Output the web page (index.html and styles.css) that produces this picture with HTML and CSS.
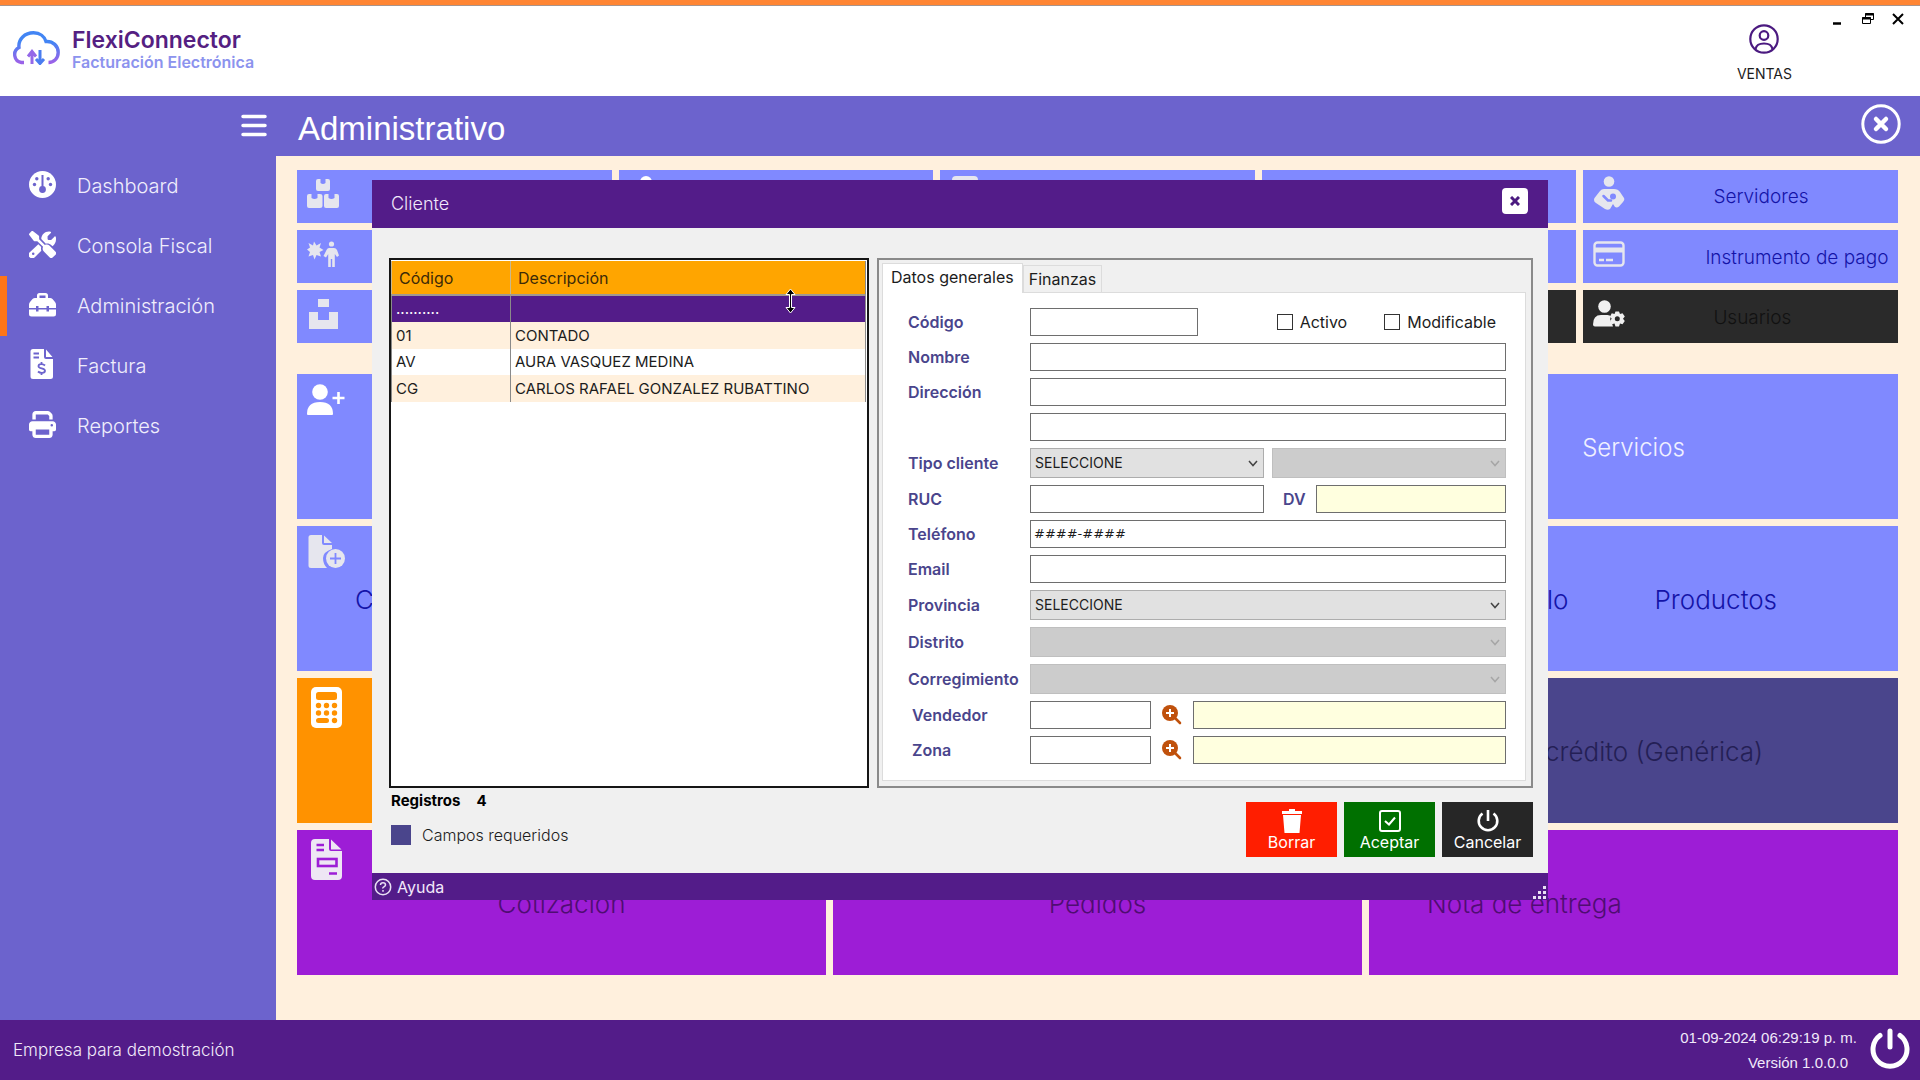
FILE: index.html
```html
<!DOCTYPE html>
<html lang="es">
<head>
<meta charset="utf-8">
<title>FlexiConnector - Facturación Electrónica</title>
<link rel="stylesheet" href="styles.css">
</head>
<body>
<div class="app">
  <header class="topbar">
    <div class="brand">
      <svg class="brand-logo" viewBox="0 0 48 34" fill="none">
        <defs><linearGradient id="cloud" x1="0" y1="0" x2="0" y2="1"><stop offset="0.3" stop-color="#4285f4"/><stop offset="1" stop-color="#9b62e8"/></linearGradient></defs>
        <path d="M12 31.500H9.500A8 8 0 0 1 7 16.500C6 8 13 1.800 21.500 1.800C28 1.800 32.500 5.500 34 10.500C41 10 46.200 15 46.200 21.500C46.200 27 42 31.500 36.500 31.500" stroke="url(#cloud)" stroke-width="3.400" stroke-linecap="butt"/>
        <path d="M20 33V22M16 25.500L20 20.500L24 25.500" stroke="#9468e8" stroke-width="3"/>
        <path d="M28 19V31M24 28L28 32.500L32 28" stroke="#4a7df0" stroke-width="3"/>
      </svg>
      <div class="brand-text">
        <span class="brand-name">FlexiConnector</span>
        <span class="brand-sub">Facturación Electrónica</span>
      </div>
    </div>
    <div class="user">
      <svg width="30" height="30" viewBox="0 0 30 30" fill="none" stroke="#4b1a80" stroke-width="2.200"><circle cx="15" cy="15" r="13.700"/><circle cx="15" cy="11.500" r="4.300"/><path d="M6.500 25C7.500 20.500 10 19.500 15 19.500S22.500 20.500 23.500 25"/></svg>
      <span>VENTAS</span>
    </div>
    <div class="window-controls">
      <button type="button" aria-label="Minimizar"><svg width="14" height="14"><path d="M2 11.500H10" stroke="#000" stroke-width="2.500"/></svg></button>
      <button type="button" aria-label="Restaurar"><svg width="14" height="14" fill="#fff" stroke="#000"><path d="M4.500 1.500H12.500V7.500H4.500Z"/><path d="M4 2.500H13" stroke-width="2"/><path d="M1.500 5.500H9.500V11.500H1.500Z"/><path d="M1 6.500H10" stroke-width="2"/></svg></button>
      <button type="button" aria-label="Cerrar"><svg width="14" height="14"><path d="M2 2L12 12M12 2L2 12" stroke="#000" stroke-width="2"/></svg></button>
    </div>
  </header>

  <div class="workspace">
    <nav class="sidebar">
      <div class="sidebar-head">
        <button type="button" aria-label="Menú"><svg width="26" height="24" stroke="#fff" stroke-width="3.500" stroke-linecap="round"><path d="M2 2.500H24M2 11.500H24M2 20.500H24"/></svg></button>
      </div>
      <a class="nav-item" href="#"><svg width="27" height="27" viewBox="0 0 27 27"><circle cx="13.500" cy="13.500" r="13.500" fill="#fff"/><g fill="#6c63cd"><circle cx="5.500" cy="13.500" r="1.700"/><circle cx="7.800" cy="7.800" r="1.700"/><circle cx="19.200" cy="7.800" r="1.700"/><circle cx="21.500" cy="13.500" r="1.700"/><circle cx="13.500" cy="18.500" r="3.400"/><rect x="12.500" y="4" width="2" height="14"/></g></svg><span>Dashboard</span></a>
      <a class="nav-item" href="#"><svg width="27" height="27" viewBox="0 0 512 512" fill="#fff"><path d="M78 5C69-2 56-1 47 7L7 47c-8 9-9 22-2 31l80 104c5 6 12 10 19 10h54l109 109c-15 29-10 65 15 90l112 112c15 15 39 15 54 0l55-55c15-15 15-39 0-54L391 281c-25-25-61-30-90-15L192 158v-54c0-8-4-15-10-19L78 5ZM20 397a68 68 0 1 0 95 95L234 373c-8-22-9-46-2-69l-55-54L20 397Zm492-253c0-11-1-21-4-31-3-12-17-15-26-6l-57 57c-3 3-7 5-11 5h-46c-9 0-16-7-16-16v-46c0-4 2-8 5-11l57-57c9-9 6-23-6-26-10-2-20-4-31-4-79 0-144 65-144 144v1l86 86c37-9 77 1 106 29l19 19c41-26 68-72 68-125ZM56 432a24 24 0 1 1 48 0 24 24 0 1 1-48 0Z"/></svg><span>Consola Fiscal</span></a>
      <a class="nav-item active" href="#"><svg width="27" height="27" viewBox="0 0 27 27" fill="#fff"><path d="M8 7V4.500Q8 2 10.500 2H16.500Q19 2 19 4.500V7H21Q22.500 7 23.500 8L26 11Q27 12 27 13.500V17H20V15H17.500V17H9.500V15H7V17H0V13.500Q0 12 1 11L3.500 8Q4.500 7 6 7ZM10.500 7H16.500V4.500H10.500ZM0 18.500H7V20.500H9.500V18.500H17.500V20.500H20V18.500H27V23Q27 25.500 24.500 25.500H2.500Q0 25.500 0 23Z" fill-rule="evenodd"/></svg><span>Administración</span></a>
      <a class="nav-item" href="#"><svg width="27" height="30" viewBox="0 0 27 30"><path d="M4 0H15V8Q15 10 17 10H24V27.500Q24 30 21.500 30H4Q1.500 30 1.500 27.500V2.500Q1.500 0 4 0ZM17 0.500L23.500 8H17Z" fill="#fff"/><path d="M4.500 4.500H10M4.500 8.500H10M12.500 13V15M12.500 24V26M16 16.500C14 14.500 9.500 14.500 9.500 17.200C9.500 20.200 16 18.500 16 21.800C16 24.500 11 24.500 9 22.500" fill="none" stroke="#6c63cd" stroke-width="1.800"/></svg><span>Factura</span></a>
      <a class="nav-item" href="#"><svg width="27" height="27" viewBox="0 0 512 512" fill="#fff"><path d="M128 0C93 0 64 29 64 64v96h64V64h227l29 29v67h64V93c0-17-7-33-19-45L400 19C388 7 372 0 355 0H128Zm256 352v96H128v-96h256Zm64 32h32c18 0 32-14 32-32v-96c0-35-29-64-64-64H64c-35 0-64 29-64 64v96c0 18 14 32 32 32h32v64c0 35 29 64 64 64h256c35 0 64-29 64-64v-64Zm-16-136a24 24 0 1 1 0 48 24 24 0 1 1 0-48Z"/></svg><span>Reportes</span></a>
    </nav>

    <main class="content">
      <div class="page-head">
        <h1>Administrativo</h1>
        <button type="button" aria-label="Cerrar sección"><svg width="40" height="40" fill="none" stroke="#fff"><circle cx="20" cy="20" r="18.200" stroke-width="3"/><path d="M15 15L25 25M25 15L15 25" stroke-width="4.500" stroke-linecap="round"/></svg></button>
      </div>

      <div class="tiles">
        <div class="tile-row small">
          <button type="button" class="tile"><svg width="32" height="32" viewBox="0 0 32 32" fill="#e6e6ee"><path d="M11 1H13.500V5Q16 7 18.500 5V1H21Q23 1 23 3V11Q23 13 21 13H11Q9 13 9 11V3Q9 1 11 1ZM2 16H4.500V20Q7.500 22 10.500 20V16H13Q15.500 16 15.500 18V28Q15.500 30 13 30H2Q0 30 0 28V18Q0 16 2 16ZM19 16H21.500V20Q24.500 22 27.500 20V16H30Q32 16 32 18V28Q32 30 30 30H19Q17 30 17 28V18Q17 16 19 16Z"/></svg></button>
          <button type="button" class="tile tall-icon"><svg width="38" height="38" viewBox="0 0 38 38" fill="#fff"><circle cx="17" cy="6" r="6"/><path d="M5 30Q5 15 17 15T29 30Z"/></svg></button>
          <button type="button" class="tile tall-icon"><svg width="32" height="38" viewBox="0 0 32 38" fill="#e6e6ee"><path d="M6 0H24Q28 0 28 4V34H2V4Q2 0 6 0Z"/></svg></button>
          <button type="button" class="tile"></button>
          <button type="button" class="tile tall-icon"><svg width="32" height="34" viewBox="0 0 32 34"><g fill="#e6e6ee"><circle cx="16" cy="5.500" r="5.300"/><path d="M11 13H21Q25 13 27 16L31 22Q32 24 30 26L26 30.500Q24 32 22 31L20 28L17 33Q15 34.500 12 33L3 27Q0 25 1.500 22L7 15Q8.500 13 11 13Z"/></g><g stroke="#8089ff" stroke-width="2.500" fill="none" stroke-linecap="round"><path d="M10.500 20L15 24.500H18"/></g><circle cx="20" cy="20.500" r="3" fill="#8089ff"/></svg><span class="tile-label inset">Servidores</span></button>
        </div>
        <div class="tile-row small">
          <button type="button" class="tile"><svg width="32" height="32" viewBox="0 0 32 32" fill="#e6e6ee"><path d="M7 3.500L9.500 7.500L14 5L12.500 9.500L16.500 12L12.500 14L14 18.500L9.500 17L7.500 21.500L6 17L1.500 18.500L3 14L0 11.500L3 9.500L1.500 5L6 7.500Z"/><circle cx="24.500" cy="6" r="2.600"/><path d="M22 10H27Q29 10 30 12L32 17.500L30 19L27.800 16V29H25.200V21H23.800V29H21.200V16L19 19.500L16.500 18L19.500 12Q20.500 10 22 10Z"/></svg></button>
          <button type="button" class="tile"></button>
          <button type="button" class="tile"></button>
          <button type="button" class="tile"></button>
          <button type="button" class="tile"><svg width="32" height="32" viewBox="0 0 32 32" fill="none" stroke="#e6e6ee"><rect x="1.500" y="4.500" width="29" height="23" rx="3" stroke-width="2.400"/><path d="M2 12H30" stroke-width="5"/><path d="M6 22H11M13 22H20" stroke-width="2.400"/></svg><span class="tile-label inset wide">Instrumento de pago</span></button>
        </div>
        <div class="tile-row small">
          <button type="button" class="tile"><svg width="32" height="32" viewBox="0 0 32 32" fill="#e6e6ee"><path d="M11 1H22V9H11ZM2 14H11V22H22V14H31V31H2Z"/></svg></button>
          <button type="button" class="tile"></button>
          <button type="button" class="tile"></button>
          <button type="button" class="tile dark"></button>
          <button type="button" class="tile dark"><svg width="32" height="32" viewBox="0 0 32 32"><g fill="#f0f0f0"><circle cx="11.500" cy="8.500" r="6.300"/><path d="M8 17H14.500Q17 17 18 18.500Q16 22 19 25.500L20 28.500H2Q0 28.500 0 26.500Q0 17 8 17Z"/><path d="M22.500 13.500H26L27 16L29.500 15.200L31.800 18.500L30 20.700L31.800 23L29.500 26.200L27 25.500L26 28.500H22.500L21.500 25.500L18.800 26.200L17 23L18.700 20.700L17 18.500L18.800 15.200L21.500 16Z"/></g><circle cx="24.300" cy="20.800" r="2.500" fill="#2a2a2a"/></svg><span class="tile-label inset">Usuarios</span></button>
        </div>

        <div class="tile-row big first">
          <button type="button" class="tile light"><svg width="38" height="34" viewBox="0 0 38 34" fill="#fff"><circle cx="13" cy="9" r="7.800"/><path d="M0 31Q0 19 13 19T26 31Q26 32 25 32H1Q0 32 0 31Z"/><path d="M31.500 9V21M25.500 15H37.500" stroke="#fff" stroke-width="2.600"/></svg></button>
          <button type="button" class="tile light"></button>
          <button type="button" class="tile light"><span class="tile-label">Servicios</span></button>
        </div>
        <div class="tile-row big">
          <button type="button" class="tile"><svg width="38" height="34" viewBox="0 0 38 34"><path d="M4 0H15V8Q15 10 17 10H25V14Q16 17 16 23Q16 29 20 33H4Q1.500 33 1.500 30.500V2.500Q1.500 0 4 0ZM17 0.500L25 8H17Z" fill="#e6e6ee"/><circle cx="28.500" cy="23.500" r="9.500" fill="#e6e6ee"/><path d="M28.500 18V29M23 23.500H34" stroke="#8089ff" stroke-width="1.800"/></svg><span class="tile-label start">C</span></button>
          <button type="button" class="tile"></button>
          <button type="button" class="tile"><span class="tile-label pair"><span>lo</span><span>Productos</span></span></button>
        </div>
        <div class="tile-row big">
          <button type="button" class="tile orange"><svg width="38" height="42" viewBox="0 0 38 42"><rect x="4" width="31" height="41" rx="5" fill="#fff"/><g fill="#ff9200"><rect x="9" y="5" width="21" height="8" rx="2.500"/><circle cx="11.500" cy="18.500" r="2.700"/><circle cx="19.500" cy="18.500" r="2.700"/><circle cx="27.500" cy="18.500" r="2.700"/><circle cx="11.500" cy="26" r="2.700"/><circle cx="19.500" cy="26" r="2.700"/><circle cx="27.500" cy="26" r="2.700"/><rect x="9" y="31" width="13" height="5" rx="2.500"/><circle cx="27.500" cy="33.500" r="2.700"/></g></svg></button>
          <button type="button" class="tile indigo"></button>
          <button type="button" class="tile indigo"><span class="tile-label credit">crédito (Genérica)</span></button>
        </div>
        <div class="tile-row big">
          <button type="button" class="tile violet"><svg width="38" height="42" viewBox="0 0 38 42"><path d="M8 0H22V10Q22 12 24 12H35V37Q35 41 31 41H8Q4 41 4 37V4Q4 0 8 0ZM24 0.500L34.500 10.500H24Z" fill="#eee6f4"/><path d="M9.500 6H17M9.500 11H17M22 34.500H30" stroke="#9d1dd6" stroke-width="2.400"/><rect x="11" y="20" width="18.500" height="7" fill="none" stroke="#9d1dd6" stroke-width="2.600"/></svg><span class="tile-label">Cotización</span></button>
          <button type="button" class="tile violet"><span class="tile-label">Pedidos</span></button>
          <button type="button" class="tile violet"><span class="tile-label note">Nota de entrega</span></button>
        </div>
      </div>
    </main>
  </div>

  <footer class="bottombar">
    <span class="company">Empresa para demostración</span>
    <div class="stamp"><span>01-09-2024 06:29:19 p. m.</span><span class="version">Versión 1.0.0.0</span></div>
    <button type="button" aria-label="Salir"><svg width="40" height="42" fill="none" stroke="#fff" stroke-width="5" stroke-linecap="round"><path d="M20 4V20"/><path d="M10 8.500A17 17 0 1 0 30 8.500"/></svg></button>
  </footer>
</div>

<div class="overlay">
  <section class="dialog" role="dialog" aria-labelledby="dialog-title">
    <div class="dialog-title">
      <h2 id="dialog-title">Cliente</h2>
      <button type="button" aria-label="Cerrar ventana"><svg width="10" height="10" stroke="#4b1a80" stroke-width="3"><path d="M1 1L9 9M9 1L1 9"/></svg></button>
    </div>

    <div class="dialog-body">
      <div class="panels">
        <div class="list">
          <table>
            <colgroup><col class="col-code"><col></colgroup>
            <thead><tr><th>Código</th><th>Descripción</th></tr></thead>
            <tbody>
              <tr class="selected"><td>..........</td><td></td></tr>
              <tr><td>01</td><td>CONTADO</td></tr>
              <tr><td>AV</td><td>AURA VASQUEZ MEDINA</td></tr>
              <tr><td>CG</td><td>CARLOS RAFAEL GONZALEZ RUBATTINO</td></tr>
            </tbody>
          </table>
          <svg class="cursor" width="13" height="26" viewBox="0 0 13 26"><path d="M6.500 1L11 6.500H7.500V19.500H11L6.500 25L2 19.500H5.500V6.500H2Z" fill="#000" stroke="#fff" stroke-width="1"/></svg>
        </div>

        <div class="details">
          <div class="tabs" role="tablist">
            <button type="button" role="tab" class="tab current" aria-selected="true">Datos generales</button>
            <button type="button" role="tab" class="tab" aria-selected="false">Finanzas</button>
          </div>
          <form class="tab-page">
            <div class="row">
              <label for="codigo">Código</label>
              <input type="text" id="codigo" class="w-code">
              <div class="checks">
                <label class="check"><input type="checkbox">Activo</label>
                <label class="check"><input type="checkbox">Modificable</label>
              </div>
            </div>
            <div class="row"><label for="nombre">Nombre</label><input type="text" id="nombre"></div>
            <div class="row"><label for="dir1">Dirección</label><input type="text" id="dir1"></div>
            <div class="row"><span class="no-label"></span><input type="text" id="dir2" aria-label="Dirección"></div>
            <div class="row">
              <label for="tipo">Tipo cliente</label>
              <div class="select w-half"><select id="tipo"><option>SELECCIONE</option></select><svg width="10" height="7"><path d="M1 1L5 5.500L9 1"/></svg></div>
              <div class="select off"><select aria-label="Tipo cliente" disabled></select><svg width="10" height="7"><path d="M1 1L5 5.500L9 1"/></svg></div>
            </div>
            <div class="row">
              <label for="ruc">RUC</label><input type="text" id="ruc" class="w-half">
              <label for="dv" class="dv">DV</label><input type="text" id="dv" class="readonly" readonly>
            </div>
            <div class="row"><label for="tel">Teléfono</label><input type="text" id="tel" class="mask" value="####-####"></div>
            <div class="row"><label for="email">Email</label><input type="text" id="email"></div>
            <div class="row"><label for="prov">Provincia</label><div class="select"><select id="prov"><option>SELECCIONE</option></select><svg width="10" height="7"><path d="M1 1L5 5.500L9 1"/></svg></div></div>
            <div class="row"><label for="dist">Distrito</label><div class="select off"><select id="dist" disabled></select><svg width="10" height="7"><path d="M1 1L5 5.500L9 1"/></svg></div></div>
            <div class="row"><label for="corr">Corregimiento</label><div class="select off"><select id="corr" disabled></select><svg width="10" height="7"><path d="M1 1L5 5.500L9 1"/></svg></div></div>
            <div class="row lookup">
              <label for="vend">Vendedor</label><input type="text" id="vend" class="w-short">
              <button type="button" aria-label="Buscar vendedor"><svg width="20" height="20"><circle cx="8" cy="8" r="8" fill="#c0510c"/><path d="M13 13L18 18" stroke="#c0510c" stroke-width="2.600" stroke-linecap="round"/><path d="M8 4V12M4 8H12" stroke="#fff" stroke-width="2"/></svg></button>
              <input type="text" class="readonly" aria-label="Nombre del vendedor" readonly>
            </div>
            <div class="row lookup">
              <label for="zona">Zona</label><input type="text" id="zona" class="w-short">
              <button type="button" aria-label="Buscar zona"><svg width="20" height="20"><circle cx="8" cy="8" r="8" fill="#c0510c"/><path d="M13 13L18 18" stroke="#c0510c" stroke-width="2.600" stroke-linecap="round"/><path d="M8 4V12M4 8H12" stroke="#fff" stroke-width="2"/></svg></button>
              <input type="text" class="readonly" aria-label="Nombre de la zona" readonly>
            </div>
          </form>
        </div>
      </div>

      <div class="dialog-foot">
        <div class="notes">
          <div class="count"><span>Registros</span><span>4</span></div>
          <div class="legend"><span class="swatch"></span>Campos requeridos</div>
        </div>
        <div class="actions">
          <button type="button" class="action delete"><svg width="24" height="24" fill="#fff"><path d="M9 0H15V2H22V5H2V2H9ZM3 6H21L19.500 24H4.500Z"/></svg>Borrar</button>
          <button type="button" class="action accept"><svg width="24" height="24" fill="none" stroke="#fff" stroke-width="2"><rect x="2" y="2" width="20" height="20" rx="2"/><path d="M7 12L11 15.500L17 8.500"/></svg>Aceptar</button>
          <button type="button" class="action cancel"><svg width="24" height="24" fill="none" stroke="#fff" stroke-width="2.600"><path d="M12 1V12"/><path d="M6.500 4.500A9.300 9.300 0 1 0 17.500 4.500"/></svg>Cancelar</button>
        </div>
      </div>
    </div>

    <div class="statusbar">
      <a href="#"><svg width="18" height="18" fill="none" stroke="#e9e0f4" stroke-width="1.500"><circle cx="9" cy="9" r="7.700"/><path d="M6.500 7Q6.500 4.800 9 4.800T11.500 7Q11.500 8 10 8.800T9 10.500M9 12V13.700"/></svg>Ayuda</a>
      <svg width="14" height="14" fill="#e9e0f4"><path d="M10 0H13V3H10ZM10 5H13V8H10ZM5 5H8V8H5ZM10 10H13V13H10ZM5 10H8V13H5ZM0 10H3V13H0Z"/></svg>
    </div>
  </section>
</div>
</body>
</html>
```
FILE: styles.css
```css
* { box-sizing: border-box; }

body {
  margin: 0;
  font-family: "Century Gothic", Inter, sans-serif;
  font-size: 15px;
  line-height: 20px;
  color: #1c1c1c;
}

button, input, select { font: inherit; color: inherit; margin: 0; }
button { border: 0; background: none; padding: 0; cursor: pointer; }
svg { display: block; flex: none; }
a { color: inherit; text-decoration: none; }
h1, h2 { margin: 0; font-weight: 400; }

.app { min-height: 100vh; display: flex; flex-direction: column; }

/* Top bar */
.topbar {
  height: 96px;
  border-top: 5px solid #ff8533;
  background: #fff;
  box-shadow: inset 0 1px #a8948c;
  display: flex;
  align-items: flex-start;
}
.brand { flex: 1; display: flex; gap: 12px; padding: 22px 0 0 12px; }
.brand-logo { width: 48px; height: 34px; margin-top: 4px; }
.brand-text { display: flex; flex-direction: column; }
.brand-name { font-size: 23px; line-height: 26px; font-weight: 600; color: #551f82; }
.brand-sub { font-size: 16px; line-height: 18px; font-weight: 600; color: #8c93ee; }
.user {
  display: flex; flex-direction: column; align-items: center;
  gap: 10px; padding-top: 19px; margin-right: 31px; font-size: 14px;
}
.window-controls { display: flex; gap: 16px; padding: 7px 15px 0 8px; }

/* Side navigation */
.workspace { flex: 1; display: flex; background: #fff0dd; }
.sidebar { width: 276px; background: #6c63cd; }
.sidebar-head { height: 60px; display: flex; justify-content: flex-end; padding: 18px 9px 0 0; }
.sidebar-head button { align-self: flex-start; }
.nav-item {
  height: 60px; display: flex; align-items: center; gap: 21px;
  padding-left: 22px; border-left: 7px solid transparent;
  font-size: 20px; font-weight: 300; color: #f0eefc;
}
.nav-item.active { border-left-color: #ff7518; }
.nav-item svg { margin-bottom: 4px; }

/* Page */
.content { flex: 1; min-width: 0; }
.page-head {
  height: 60px; background: #6c63cd; color: #fff;
  display: flex; align-items: center; justify-content: space-between;
  padding: 0 19px 4px 22px;
}
.page-head h1 { font: 33px/36px "Liberation Sans", Arial, sans-serif; padding-top: 10px; }
.tiles { padding: 14px 22px 0 21px; display: flex; flex-direction: column; gap: 7px; }
.tile-row { display: grid; gap: 7px; }
.tile-row.small { grid-template-columns: repeat(5, 1fr); }
.tile-row.big { grid-template-columns: repeat(3, 1fr); }
.tile-row.first { margin-top: 24px; }
.tile {
  display: flex; align-items: flex-start; text-align: left;
  height: 53px; padding: 8px 10px 6px; overflow: hidden;
  background: #8089ff; color: #1414a8; font-size: 19px; font-weight: 300;
}
.tile.tall-icon { padding-top: 6px; }
.big .tile { height: 145px; padding-top: 9px; font-size: 26px; line-height: 28px; }
.big .tile.light { font-size: 24px; }
.tile-label { align-self: center; white-space: nowrap; flex: 1; text-align: center; }
.tile-label.inset { flex: none; padding-left: 88px; }
.tile-label.wide { padding-left: 80px; }
.big .tile svg + .tile-label { margin-right: 38px; }
.tile-label.start, .tile-label.credit, .tile-label.note { text-align: left; }
.tile-label.start { padding-left: 10px; }
.tile-label.credit { padding-left: 166px; }
.tile-label.note { padding-left: 48px; }
.tile-label.pair { display: flex; gap: 86px; padding-left: 168px; }
.tile.light { color: #f0f0ff; }
.tile.dark { background: #2a2a2a; color: #111; }
.tile.orange { background: #ff9200; }
.tile.indigo { background: #4a458c; color: #241f55; }
.tile.violet { background: #9d1dd6; color: #4f0d72; }

/* Bottom bar */
.bottombar {
  height: 60px; background: #531c89; color: #f1e9fa;
  display: flex; align-items: center; padding: 0 10px 0 13px;
}
.bottombar button { margin-bottom: 4px; }
.company { flex: 1; font-size: 17px; font-weight: 300; }
.stamp {
  display: flex; flex-direction: column; align-items: flex-end;
  font: 15px/25px "Liberation Sans", Arial, sans-serif; margin-right: 13px;
}
.version { padding-right: 9px; }

/* Dialog */
.overlay { position: fixed; inset: 0; display: grid; place-items: center; }
.dialog { width: 1176px; max-width: 100%; background: #f0f0f0; }
.dialog-title {
  height: 48px; background: #531c89; color: #f1e9fa;
  display: flex; align-items: center; justify-content: space-between; padding: 0 20px 0 19px;
}
.dialog-title h2 { font-size: 18px; font-weight: 300; }
.dialog-title button {
  width: 26px; height: 26px; margin-bottom: 7px; border-radius: 4px; background: #fff;
  display: grid; place-items: center;
}
.dialog-body { padding: 30px 15px 16px 17px; }
.panels { display: flex; gap: 8px; }

.list { position: relative; flex: none; width: 480px; border: 2px solid #151515; background: #fff; padding: 1px 1px 1px 0; }
.cursor { position: absolute; left: 393px; top: 28px; }
.list table { width: 100%; border-collapse: collapse; table-layout: fixed; border-right: 1px solid #8a8a8a; }
.col-code { width: 119px; }
.list th {
  height: 34px; padding: 0 7px; background: #ffa500; border-left: 1px solid #c8b890;
  border-bottom: 2px solid #a09890; font-size: 16px; font-weight: 400; text-align: left; color: #3c2a08;
}
.list td { height: 26px; padding: 0 4px; border-left: 1px solid #8a8a8a; font-size: 15px; white-space: nowrap; }
.list tbody tr:nth-child(even) { height: 27px; background: #fff0dd; }
.list .selected { height: 27px; background: #531c89; color: #fff; }

.details { flex: 1; min-width: 0; border: 2px solid #8a8a8a; padding: 3px 5px 5px 3px; }
.tabs { display: flex; align-items: flex-end; }
.tab { height: 27px; padding: 0 5px; border: 1px solid #dcdcdc; border-bottom: 0; font-size: 16px; }
.tab.current { height: 30px; padding: 0 8px 4px; background: #fff; margin-bottom: -1px; }
.tab-page {
  display: flex; flex-direction: column; gap: 7px;
  border: 1px solid #dcdcdc; background: #fff; padding: 15px 19px 16px 25px;
}
.row { display: flex; align-items: center; }
.row > label, .no-label { width: 122px; flex: none; font-size: 16px; font-weight: 600; color: #4a458c; }
.lookup > label { padding-left: 4px; }
.row > input {
  flex: 1; min-width: 0; height: 28px; border: 1px solid #6e6e6e; border-radius: 0;
  background: #fff; padding: 0 4px; outline: 0;
}
.row > input.readonly { background: #ffffdf; }
.row > input.w-code { flex: none; width: 168px; }
.row > .w-half, .row > input.w-half { flex: none; width: 234px; }
.row > input.w-short { flex: none; width: 121px; }
.row > input.mask { font: 13px/20px "DejaVu Sans", sans-serif; padding: 0 3px 2px; }
.row > label.dv { width: 52px; padding-left: 19px; }
.lookup > button { margin: 0 11px; }
.checks { display: flex; gap: 37px; margin-left: auto; padding-right: 10px; font-size: 16px; }
.check { display: flex; align-items: center; gap: 7px; }
.check input { appearance: none; width: 16px; height: 16px; border: 1px solid #333; background: #fff; }
.select { flex: 1; min-width: 0; display: grid; align-items: center; }
.select + .select { margin-left: 8px; }
.select > * { grid-area: 1 / 1; }
.select select {
  appearance: none; width: 100%; height: 30px; border: 1px solid #adadad; border-radius: 0;
  background: #e1e1e1; padding: 0 4px; font-size: 14px; opacity: 1;
}
.select svg { justify-self: end; margin-right: 6px; fill: none; stroke: #444; stroke-width: 1.5px; pointer-events: none; }
.select.off select { background: #ccc; border-color: #bfbfbf; }
.select.off svg { stroke: #a6a6a6; }

.dialog-foot { display: flex; justify-content: space-between; }
.notes { padding: 3px 0 0 2px; }
.count { display: flex; gap: 16px; font-weight: 700; color: #000; }
.legend { display: flex; align-items: center; gap: 11px; margin-top: 14px; font-size: 16px; font-weight: 300; }
.swatch { width: 20px; height: 20px; background: #4a458c; }
.actions { display: flex; gap: 7px; padding-top: 14px; }
.action {
  width: 91px; height: 55px; display: flex; flex-direction: column; align-items: center;
  padding-top: 7px; color: #fff; font-size: 16px; line-height: 18px;
}
.delete { background: #ff1e00; }
.accept { background: #007000; }
.cancel { background: #262626; }
.statusbar {
  height: 27px; background: #531c89; color: #f1e9fa; font-size: 16px;
  display: flex; justify-content: space-between; align-items: center; padding: 0 1px 0 2px;
}
.statusbar a { display: flex; align-items: center; gap: 5px; }
.statusbar > svg { align-self: flex-end; }
```
